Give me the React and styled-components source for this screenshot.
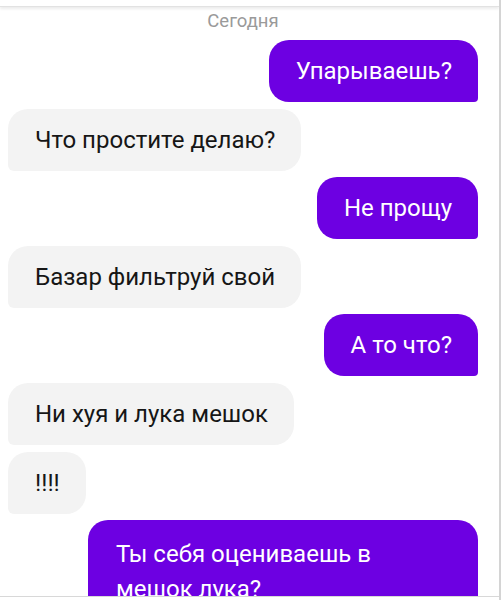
import React from "react";
import styled, { createGlobalStyle } from "styled-components";

const GlobalStyle = createGlobalStyle`
  html, body {
    margin: 0;
    padding: 0;
    background: #ffffff;
  }
  body {
    font-family: Roboto, "Noto Sans", sans-serif;
  }
`;

const Screen = styled.div`
  width: 501px;
  height: 600px;
  box-sizing: border-box;
  display: flex;
  flex-direction: column;
  overflow: hidden;
  background: #ffffff;
  border-right: 2px solid #d4d4d4;
`;

const TopBar = styled.div`
  height: 6px;
  flex-shrink: 0;
  background: #ffffff;
  border-bottom: 1px solid #e2e2e2;
  box-shadow: 0 2px 3px rgba(0, 0, 0, 0.08);
  position: relative;
  z-index: 1;
`;

const Feed = styled.div`
  flex: 1;
  overflow: hidden;
  display: flex;
  flex-direction: column;
  padding: 0 21px 0 8px;
`;

const DateLabel = styled.div`
  text-align: center;
  font-size: 18.5px;
  line-height: 22px;
  color: #9a9a9a;
  padding: 3px 0 8px;
`;

const Row = styled.div`
  display: flex;
  justify-content: ${(p) => (p.$mine ? "flex-end" : "flex-start")};
  margin-bottom: 6.6px;
`;

const Bubble = styled.div`
  box-sizing: border-box;
  max-width: 390px;
  width: ${(p) => (p.$full ? "390px" : "auto")};
  padding: ${(p) => (p.$full ? "17px 26px 15px 28px" : "15px 26px 15px 27px")};
  font-size: 24px;
  line-height: ${(p) => (p.$full ? "35px" : "32px")};
  border-radius: ${(p) => (p.$mine ? "20px 20px 4px 20px" : "20px 20px 20px 6px")};
  background: ${(p) => (p.$mine ? "#6d00e2" : "#f3f3f3")};
  color: ${(p) => (p.$mine ? "#ffffff" : "#161616")};
  white-space: nowrap;
`;

const InputBar = styled.div`
  height: 3px;
  flex-shrink: 0;
  background: #ffffff;
  border-top: 1px solid #d8d8d8;
`;

const messages = [
  { mine: true, text: "Упарываешь?" },
  { mine: false, text: "Что простите делаю?" },
  { mine: true, text: "Не прощу" },
  { mine: false, text: "Базар фильтруй свой" },
  { mine: true, text: "А то что?" },
  { mine: false, text: "Ни хуя и лука мешок" },
  { mine: false, text: "!!!!" },
  { mine: true, full: true, lines: ["Ты себя оцениваешь в", "мешок лука?"] },
];

export default function App() {
  return (
    <>
      <GlobalStyle />
      <Screen>
        <TopBar />
        <Feed>
          <DateLabel>Сегодня</DateLabel>
          {messages.map((m, i) => (
            <Row key={i} $mine={m.mine}>
              <Bubble $mine={m.mine} $full={m.full}>
                {m.lines
                  ? m.lines.map((l, j) => (
                      <React.Fragment key={j}>
                        {l}
                        {j < m.lines.length - 1 && <br />}
                      </React.Fragment>
                    ))
                  : m.text}
              </Bubble>
            </Row>
          ))}
        </Feed>
        <InputBar />
      </Screen>
    </>
  );
}
